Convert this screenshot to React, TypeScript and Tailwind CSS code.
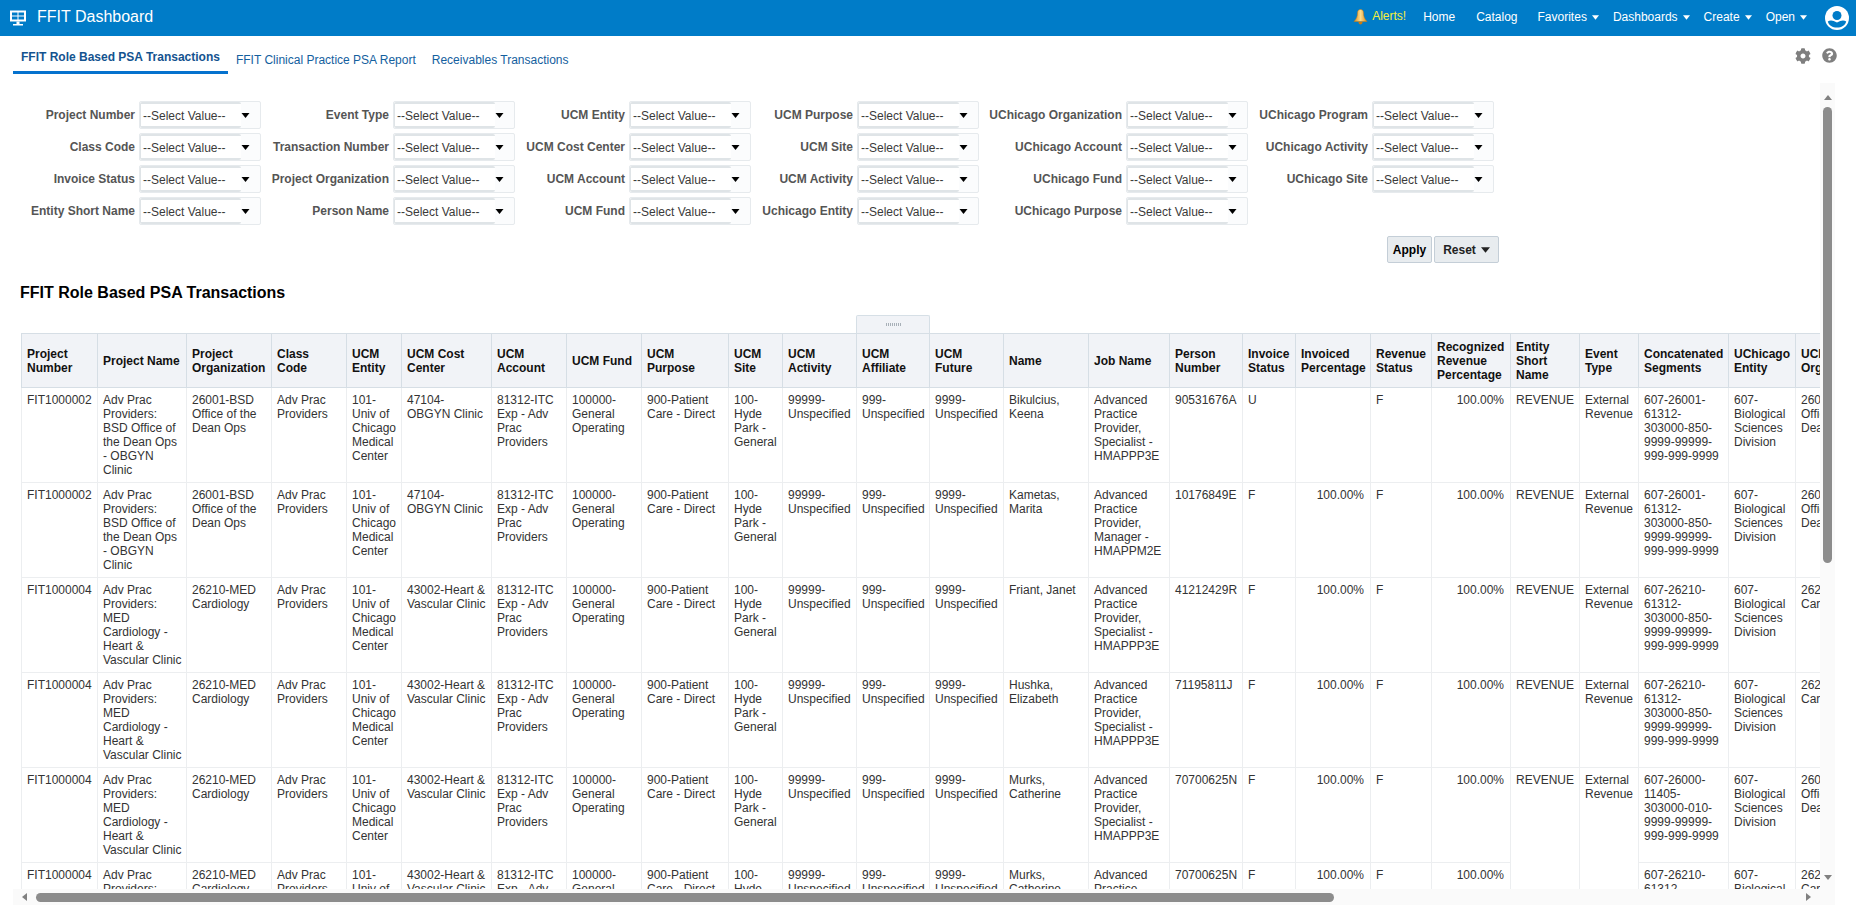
import { FaCog, FaQuestionCircle } from "react-icons/fa"

const filterRows = [
  ["Project Number", "Event Type", "UCM Entity", "UCM Purpose", "UChicago Organization", "UChicago Program"],
  ["Class Code", "Transaction Number", "UCM Cost Center", "UCM Site", "UChicago Account", "UChicago Activity"],
  ["Invoice Status", "Project Organization", "UCM Account", "UCM Activity", "UChicago Fund", "UChicago Site"],
  ["Entity Short Name", "Person Name", "UCM Fund", "Uchicago Entity", "UChicago Purpose", ""],
]

const columns = [
  { title: "Project\nNumber", width: 76 },
  { title: "Project Name", width: 89 },
  { title: "Project\nOrganization", width: 85 },
  { title: "Class\nCode", width: 75 },
  { title: "UCM\nEntity", width: 55 },
  { title: "UCM Cost\nCenter", width: 90 },
  { title: "UCM\nAccount", width: 75 },
  { title: "UCM Fund", width: 75 },
  { title: "UCM\nPurpose", width: 87 },
  { title: "UCM\nSite", width: 54 },
  { title: "UCM\nActivity", width: 74 },
  { title: "UCM\nAffiliate", width: 73 },
  { title: "UCM\nFuture", width: 74 },
  { title: "Name", width: 85 },
  { title: "Job Name", width: 81 },
  { title: "Person\nNumber", width: 73 },
  { title: "Invoice\nStatus", width: 53 },
  { title: "Invoiced\nPercentage", width: 75 },
  { title: "Revenue\nStatus", width: 61 },
  { title: "Recognized\nRevenue\nPercentage", width: 79 },
  { title: "Entity\nShort\nName", width: 69 },
  { title: "Event\nType", width: 59 },
  { title: "Concatenated\nSegments", width: 90 },
  { title: "UChicago\nEntity", width: 67 },
  { title: "UChicago\nOrganization", width: 90 },
]

const bsdName = "Adv Prac\nProviders:\nBSD Office of\nthe Dean Ops\n- OBGYN\nClinic"
const medName = "Adv Prac\nProviders:\nMED\nCardiology -\nHeart &\nVascular Clinic"
const bsdOrg = "26001-BSD\nOffice of the\nDean Ops"
const medOrg = "26210-MED\nCardiology"
const seg26001 = "607-26001-\n61312-\n303000-850-\n9999-99999-\n999-999-9999"
const seg26210 = "607-26210-\n61312-\n303000-850-\n9999-99999-\n999-999-9999"
const seg26000 = "607-26000-\n11405-\n303000-010-\n9999-99999-\n999-999-9999"
const specialist = "Advanced\nPractice\nProvider,\nSpecialist -\nHMAPPP3E"
const obgyn = "47104-\nOBGYN Clinic"
const heart = "43002-Heart &\nVascular Clinic"

const rows = [
  { num: "FIT1000002", pname: bsdName, org: bsdOrg, cost: obgyn, name: "Bikulcius,\nKeena", job: specialist, person: "90531676A", inv: "U", pct: "", seg: seg26001, uorg: "26001-BSD\nOffice of the\nDean Ops" },
  { num: "FIT1000002", pname: bsdName, org: bsdOrg, cost: obgyn, name: "Kametas,\nMarita", job: "Advanced\nPractice\nProvider,\nManager -\nHMAPPM2E", person: "10176849E", inv: "F", pct: "100.00%", seg: seg26001, uorg: "26001-BSD\nOffice of the\nDean Ops" },
  { num: "FIT1000004", pname: medName, org: medOrg, cost: heart, name: "Friant, Janet", job: specialist, person: "41212429R", inv: "F", pct: "100.00%", seg: seg26210, uorg: "26210-MED\nCardiology" },
  { num: "FIT1000004", pname: medName, org: medOrg, cost: heart, name: "Hushka,\nElizabeth", job: specialist, person: "71195811J", inv: "F", pct: "100.00%", seg: seg26210, uorg: "26210-MED\nCardiology" },
  { num: "FIT1000004", pname: medName, org: medOrg, cost: heart, name: "Murks,\nCatherine", job: specialist, person: "70700625N", inv: "F", pct: "100.00%", seg: seg26000, uorg: "26000-BSD\nOffice of the\nDean Ops", span: 2 },
  { num: "FIT1000004", pname: medName, org: medOrg, cost: heart, name: "Murks,\nCatherine", job: specialist, person: "70700625N", inv: "F", pct: "100.00%", seg: seg26210, uorg: "26210-MED\nCardiology", merged: true },
]

function Caret({ className }: { className: string }) {
  return (
    <svg viewBox="0 0 8 5" className={className}>
      <polygon points="0,0 8,0 4,5" fill="currentColor" />
    </svg>
  )
}

function NavItem({ label, className, menu }: { label: string; className: string; menu?: boolean }) {
  return (
    <div className={`mb-[2px] flex items-center text-xs text-white ${className}`}>
      {label}
      {menu && <Caret className="ml-[5px] h-[5px] w-[7px]" />}
    </div>
  )
}

function Select() {
  return (
    <div className="flex h-[28px] items-center rounded-[2px] border border-[#e6eaed] bg-[#fbfcfd]">
      <div className="flex h-full w-[101px] items-center rounded-[2px] border-y-2 border-l border-[#dfe4e7] bg-white pt-[1px] pl-[2px] text-xs text-[#3a3a3a]">
        --Select Value--
      </div>
      <Caret className="h-[5px] w-[9px] text-black" />
    </div>
  )
}

function Cell({ children, right, span }: { children?: string; right?: boolean; span?: number }) {
  return (
    <td
      rowSpan={span}
      className={`h-[95px] border border-[#eceef0] py-[5px] pr-[6px] pl-[5px] align-top text-xs leading-[14px] whitespace-pre text-[#333] ${right ? "text-right" : ""}`}
    >
      {children}
    </td>
  )
}

export default function App() {
  return (
    <div className="flex h-[910px] flex-col overflow-hidden bg-white font-['Liberation_Sans',Arial,sans-serif]">
      <header className="flex h-9 shrink-0 items-center bg-[#007cc8] pr-[7px] pl-[9px]">
        <svg viewBox="0 0 18 18" className="h-[18px] w-[18px]">
          <path d="M1 1.500h16v11H1z" fill="#fff" />
          <path d="M3 3.500h5.500v3H3zM9.500 3.500H15v3H9.500zM3 7.500h5.500v3H3zM9.500 7.500H15v3H9.500z" fill="#007cc8" />
          <path d="M7.500 12.500h3v2.500h-3zM4 15h10v1.500H4z" fill="#fff" />
        </svg>
        <div className="mb-[2px] ml-[10px] text-base text-white">FFIT Dashboard</div>
        <svg viewBox="0 0 14 16" className="mb-[2px] ml-auto h-4 w-[15px]">
          <defs>
            <linearGradient id="bell" x1="0" y1="0" x2="1" y2="0">
              <stop offset="0" stopColor="#d88a1c" />
              <stop offset="0.5" stopColor="#fbdc8c" />
              <stop offset="1" stopColor="#d88a1c" />
            </linearGradient>
          </defs>
          <path d="M7 .5c2.200 0 3 1.600 3 3.500 0 3.400 1 6 3.500 8.500H.5C3 10 4 7.400 4 4c0-1.900.8-3.500 3-3.500z" fill="url(#bell)" stroke="#c87a14" strokeWidth="0.5" />
          <path d="M5 13h4c0 1.500-.8 2.500-2 2.500S5 14.500 5 13z" fill="#c87a14" />
        </svg>
        <div className="mb-[4px] ml-[4px] text-xs text-[#f5ee3c]">Alerts!</div>
        <NavItem label="Home" className="ml-[17px]" />
        <NavItem label="Catalog" className="ml-[21px]" />
        <NavItem label="Favorites" className="ml-[20px]" menu />
        <NavItem label="Dashboards" className="ml-[14px]" menu />
        <NavItem label="Create" className="ml-[14px]" menu />
        <NavItem label="Open" className="ml-[14px]" menu />
        <svg viewBox="0 0 24 24" className="ml-[18px] h-6 w-6">
          <circle cx="12" cy="12" r="12" fill="#fff" />
          <circle cx="12" cy="9.500" r="4.500" fill="#007cc8" />
          <path d="M2.800 15.500C5 13.800 8 14 12 16.500c4-2.500 7-2.700 9.200-1C20 19.500 16.500 21.500 12 21.500S4 19.500 2.800 15.500z" fill="#007cc8" />
        </svg>
      </header>

      <div className="flex h-[47px] shrink-0 pl-[13px]">
        <div className="mt-[13px] h-[25px] border-b-[3px] border-[#0572ce] px-[8px] text-xs leading-[16px] font-bold text-[#14538f]">
          FFIT Role Based PSA Transactions
        </div>
        <div className="mt-[16px] ml-[8px] text-xs leading-[16px] text-[#14609e]">FFIT Clinical Practice PSA Report</div>
        <div className="mt-[16px] ml-[16px] text-xs leading-[16px] text-[#14609e]">Receivables Transactions</div>
        <div className="mt-[12px] ml-auto flex items-start gap-[11px] pr-[19px] text-[#7f7f7f]">
          <FaCog className="h-4 w-4" />
          <FaQuestionCircle className="h-[15px] w-[15px]" />
        </div>
      </div>

      <div className="relative mr-[21px] ml-[13px] h-[822px] overflow-hidden">
        <div className="grid grid-cols-[126px_122px_132px_122px_114px_122px_106px_122px_147px_122px_124px_122px] gap-y-1 pt-[18px]">
          {filterRows.flatMap((labels) =>
            labels.flatMap((label) => [
              <div key={label + "-label"} className="flex h-[28px] items-center justify-end pr-[4px] text-xs font-bold text-[#555]">
                {label}
              </div>,
              label ? <Select key={label + "-select"} /> : <div key="empty" />,
            ]),
          )}
        </div>

        <div className="mt-[11px] flex w-[1486px] justify-end gap-[2px]">
          <button className="h-[27px] w-[45px] rounded-[2px] border border-[#c4ced7] bg-[#e8ecef] text-xs font-bold text-black">Apply</button>
          <button className="flex h-[27px] w-[65px] items-center justify-center gap-[5px] rounded-[2px] border border-[#c4ced7] bg-[#e8ecef] text-xs font-bold text-[#222]">
            Reset
            <Caret className="h-[6px] w-[9px]" />
          </button>
        </div>

        <h1 className="mt-[21px] pl-[7px] text-base leading-[18px] font-bold text-black">FFIT Role Based PSA Transactions</h1>

        <div className="mt-[13px] ml-[843px] flex h-[18px] w-[74px] items-center justify-center rounded-t-[2px] border-x border-t border-[#d6dfe6] bg-[#f1f3f7]">
          <div className="h-[3px] w-[15px] bg-[repeating-linear-gradient(90deg,#a8b0b8_0,#a8b0b8_1px,transparent_1px,transparent_2px)]" />
        </div>

        <table className="ml-[8px] table-fixed border-collapse" style={{ width: columns.reduce((sum, c) => sum + c.width, 0) }}>
          <colgroup>
            {columns.map((c) => (
              <col key={c.title} style={{ width: c.width }} />
            ))}
          </colgroup>
          <thead>
            <tr>
              {columns.map((c) => (
                <th key={c.title} className="h-[54px] border border-[#d6dee5] bg-[#f1f3f7] pr-[4px] pl-[5px] text-left align-middle text-xs leading-[14px] font-bold whitespace-pre text-[#111]">
                  {c.title}
                </th>
              ))}
            </tr>
          </thead>
          <tbody>
            {rows.map((r, i) => (
              <tr key={i}>
                <Cell>{r.num}</Cell>
                <Cell>{r.pname}</Cell>
                <Cell>{r.org}</Cell>
                <Cell>{"Adv Prac\nProviders"}</Cell>
                <Cell>{"101-\nUniv of\nChicago\nMedical\nCenter"}</Cell>
                <Cell>{r.cost}</Cell>
                <Cell>{"81312-ITC\nExp - Adv\nPrac\nProviders"}</Cell>
                <Cell>{"100000-\nGeneral\nOperating"}</Cell>
                <Cell>{"900-Patient\nCare - Direct"}</Cell>
                <Cell>{"100-\nHyde\nPark -\nGeneral"}</Cell>
                <Cell>{"99999-\nUnspecified"}</Cell>
                <Cell>{"999-\nUnspecified"}</Cell>
                <Cell>{"9999-\nUnspecified"}</Cell>
                <Cell>{r.name}</Cell>
                <Cell>{r.job}</Cell>
                <Cell>{r.person}</Cell>
                <Cell>{r.inv}</Cell>
                <Cell right>{r.pct}</Cell>
                <Cell>F</Cell>
                <Cell right>100.00%</Cell>
                {!r.merged && <Cell span={r.span}>REVENUE</Cell>}
                {!r.merged && <Cell span={r.span}>{"External\nRevenue"}</Cell>}
                <Cell>{r.seg}</Cell>
                <Cell>{"607-\nBiological\nSciences\nDivision"}</Cell>
                <Cell>{r.uorg}</Cell>
              </tr>
            ))}
          </tbody>
        </table>

        {/* fake scrollbars, they sit on top of the clipped content */}
        <div className="absolute top-0 right-0 bottom-0 w-[15px] bg-[#fafafa]">
          <Caret className="absolute top-[12px] left-[4px] h-[5px] w-[8px] rotate-180 text-[#808080]" />
          <div className="absolute top-[24px] left-[3px] h-[456px] w-[9px] rounded-[5px] bg-[#8c8c8c]" />
          <Caret className="absolute top-[792px] left-[4px] h-[5px] w-[8px] text-[#808080]" />
        </div>
        <div className="absolute right-0 bottom-0 left-0 h-[16px] bg-[#fafafa]">
          <svg viewBox="0 0 5 8" className="absolute top-[4px] left-[9px] h-[8px] w-[5px] text-[#808080]">
            <polygon points="5,0 5,8 0,4" fill="currentColor" />
          </svg>
          <div className="absolute top-[4px] left-[23px] h-[9px] w-[1298px] rounded-[5px] bg-[#8c8c8c]" />
          <svg viewBox="0 0 5 8" className="absolute top-[4px] left-[1793px] h-[8px] w-[5px] text-[#808080]">
            <polygon points="0,0 5,4 0,8" fill="currentColor" />
          </svg>
        </div>
      </div>
    </div>
  )
}
